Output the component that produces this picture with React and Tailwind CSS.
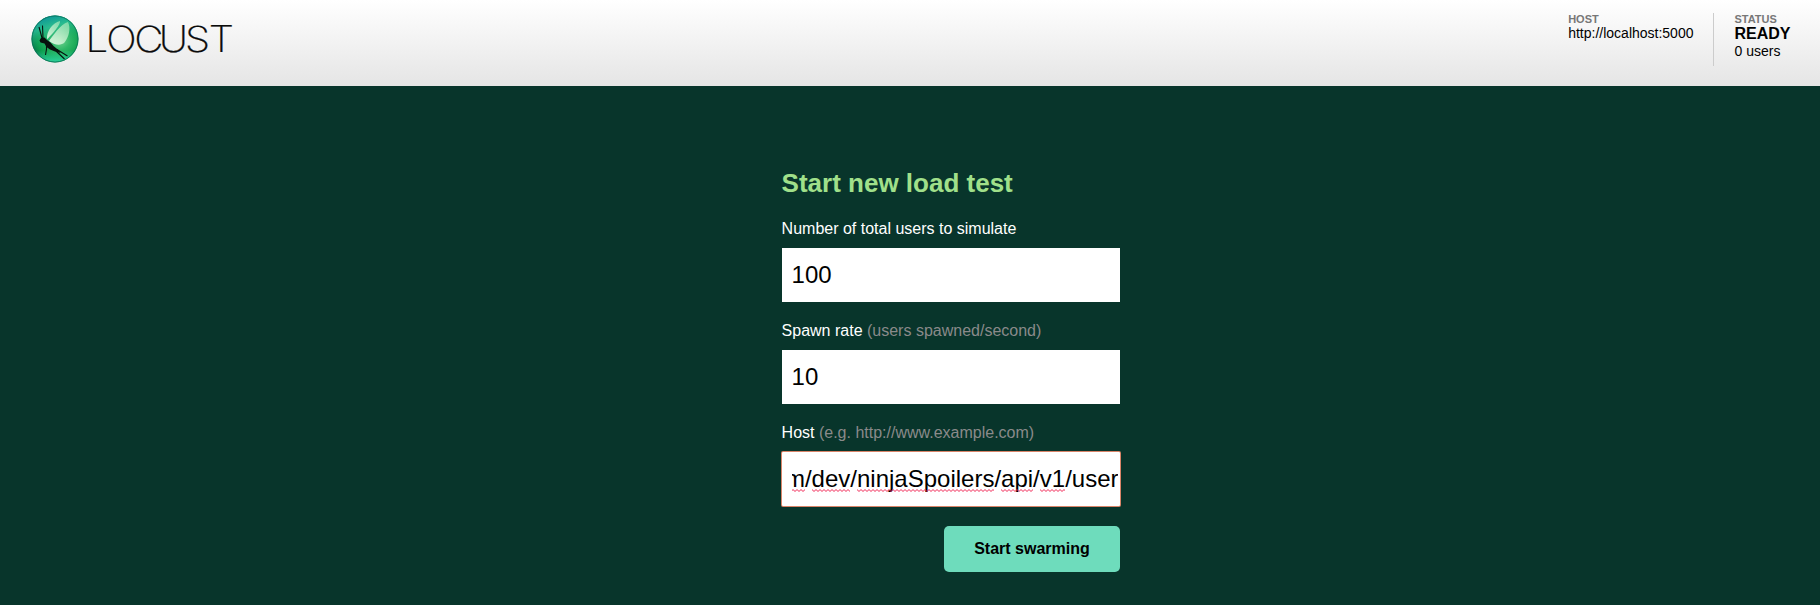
function LocustLogo() {
  return (
    <svg className="block" width="210" height="56" viewBox="0 0 210 56" role="img" aria-label="Locust">
      <defs>
        <radialGradient id="orb" cx="0.6" cy="0.5" r="0.58">
          <stop offset="0" stopColor="#7fd79a" />
          <stop offset="0.4" stopColor="#2fb866" />
          <stop offset="0.8" stopColor="#0b9d4c" />
          <stop offset="1" stopColor="#067b4a" />
        </radialGradient>
        <linearGradient id="sky" x1="0.2" y1="0" x2="0.4" y2="0.7">
          <stop offset="0" stopColor="#078c9c" />
          <stop offset="0.4" stopColor="#2cc0a0" stopOpacity="0.75" />
          <stop offset="1" stopColor="#0fa050" stopOpacity="0" />
        </linearGradient>
        <linearGradient id="glow" x1="0" y1="0" x2="0" y2="1">
          <stop offset="0.75" stopColor="#37e0b0" stopOpacity="0" />
          <stop offset="1" stopColor="#37e0b0" stopOpacity="0.8" />
        </linearGradient>
        <linearGradient id="wing" x1="1" y1="0" x2="0.2" y2="1">
          <stop offset="0" stopColor="#9fe6b4" stopOpacity="0.7" />
          <stop offset="1" stopColor="#e4f9e4" stopOpacity="0.9" />
        </linearGradient>
      </defs>
      <circle cx="25" cy="29" r="23.5" fill="url(#orb)" />
      <circle cx="25" cy="29" r="23.5" fill="url(#sky)" />
      <circle cx="25" cy="29" r="23" fill="url(#glow)" stroke="#08705a" strokeOpacity="0.75" />
      <path d="M17 28.500C16.500 21 22.500 13 30 11C30.500 14.500 24 22 17.500 29Z" fill="url(#wing)" />
      <path d="M19 31C23 26 30 14.500 38 12C41 18 39 27 34.500 32.500C31 36 24 35 19 31Z" fill="url(#wing)" />
      <path d="M9.500 30.500L11 28L14.500 27.500L17 30L20.500 32.500L23.500 36L29.500 41L30.500 43L25 41.500L20 39.500L16.500 37L14.500 33.500L10.500 32.500Z" fill="#07120d" />
      <path d="M12 28L9 17M13 28L12.500 15.500M16.500 35L16.500 39L15.500 45M27 39.500L37.500 46M26 41L34.500 49" fill="none" stroke="#07120d" strokeWidth="1.100" />
      <text
        transform="scale(1.12 1)"
        x="49.600 68 93 115 138.300 159.500"
        y="41.700"
        strokeWidth="0.25"
        className="fill-[#0b0b0b] stroke-[#0b0b0b] font-['Inter',sans-serif] text-[36px] font-extralight"
      >
        LOCUST
      </text>
    </svg>
  );
}

function Field({ label, hint, value }) {
  return (
    <label className="mb-[20px] block text-base leading-[18px]">
      <span className="text-white">{label}</span>
      {hint && <span className="text-[#8a8a8a]"> {hint}</span>}
      <input
        type="text"
        defaultValue={value}
        className="mt-[10px] block h-[54px] w-full bg-white px-[10px] text-2xl text-black outline-none"
      />
    </label>
  );
}

function Misspelled({ children }) {
  return (
    <span className="relative inline-block">
      {children}
      <svg className="absolute bottom-0 left-0 h-[3px] w-full" aria-hidden="true">
        <defs>
          <pattern id="squiggle" width="4" height="3" patternUnits="userSpaceOnUse">
            <path d="M-1 1.500L0 0.500L2 2.500L4 0.500L5 1.500" fill="none" stroke="#f0204f" strokeWidth="1" />
          </pattern>
        </defs>
        <rect width="100%" height="3" fill="url(#squiggle)" />
      </svg>
    </span>
  );
}

export default function App() {
  return (
    <div className="flex h-[605px] w-full flex-col overflow-hidden bg-[#08352b] font-['Liberation_Sans',Arial,sans-serif]">
      <header className="flex h-[86px] shrink-0 items-start justify-between bg-linear-to-b from-white to-[#e5e5e5] pr-[29.500px] pl-[30px]">
        <div className="pt-[10px]">
          <LocustLogo />
        </div>
        <div className="flex pt-[13px] text-sm leading-4 text-black">
          <div className="h-[53px] border-r border-[#ccc] pr-[20px]">
            <div className="text-[11px] leading-3 font-bold text-[#777]">HOST</div>
            <div>http://localhost:5000</div>
          </div>
          <div className="h-[53px] pl-[20px]">
            <div className="text-[11px] leading-3 font-bold text-[#777]">STATUS</div>
            <div className="text-base leading-[18px] font-bold">READY</div>
            <div>0 users</div>
          </div>
        </div>
      </header>
      <main className="ml-[781.600px] w-[338.400px] pt-[81px]">
        <h1 className="mb-[21px] text-[26px] leading-[32px] font-bold text-[#a0e08a]">Start new load test</h1>
        <Field label="Number of total users to simulate" value="100" />
        <Field label="Spawn rate" hint="(users spawned/second)" value="10" />
        <div className="text-base leading-[18px]">
          <span className="text-white">Host</span>
          <span className="text-[#8a8a8a]"> (e.g. http://www.example.com)</span>
          <div className="mt-[10px] flex h-[54px] items-center rounded-[1px] bg-white pr-[1.500px] pb-[2px] pl-[10px] text-2xl text-black ring-1 ring-[#d98468]">
            <div className="flex h-9 w-full items-center justify-end overflow-hidden whitespace-nowrap">
              <div className="leading-[27px]">
                <Misspelled>m</Misspelled>/<Misspelled>dev</Misspelled>/
                <Misspelled>ninjaSpoilers</Misspelled>/<Misspelled>api</Misspelled>/
                <Misspelled>v1</Misspelled>/user
              </div>
            </div>
          </div>
        </div>
        <div className="mt-[20px] flex justify-end">
          <button className="h-[46px] w-[176px] rounded-[5px] bg-[#6edcbc] text-base font-bold text-black">
            Start swarming
          </button>
        </div>
      </main>
    </div>
  );
}
